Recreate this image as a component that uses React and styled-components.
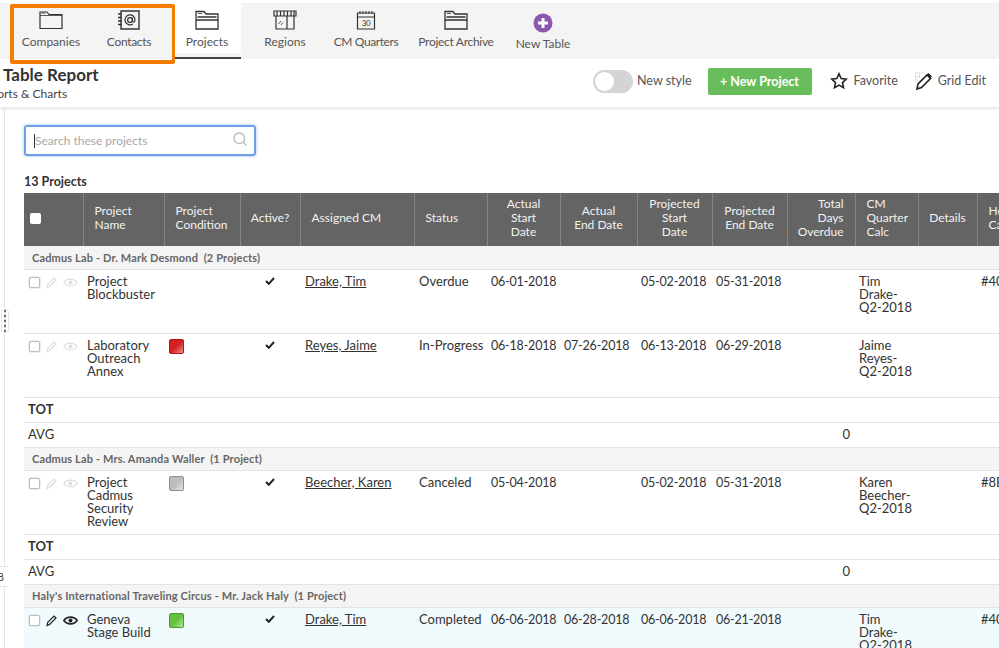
import React from 'react';
import styled, { createGlobalStyle } from 'styled-components';
import { FiSearch } from 'react-icons/fi';

const GlobalStyle = createGlobalStyle`
  html, body {
    margin: 0;
    padding: 0;
    background: #fff;
    font-family: Lato, "Open Sans", sans-serif;
    color: #333;
  }
`

const Page = styled.div`
  position: relative;
  width: 999px;
  height: 648px;
  overflow: hidden;
  background: #fff;
`

const TopNav = styled.nav`
  display: flex;
  align-items: stretch;
  height: 56px;
  margin-top: 3px;
  padding-left: 12px;
  background: #f4f4f4;
`

const Tab = styled.div`
  display: flex;
  flex-direction: column;
  align-items: center;
  box-sizing: border-box;
  width: ${p => p.$width}px;
  margin-left: ${p => p.$gap || 0}px;
  padding-top: ${p => p.$top || 7}px;
  font-size: 12px;
  letter-spacing: ${p => p.$track || 0}px;
  color: #555;
  background: ${p => (p.$active ? 'linear-gradient(#fff 0 50px, #f4f4f4 50px)' : 'transparent')};
  border-bottom: 2px solid ${p => (p.$active ? '#444' : 'transparent')};
  border-radius: 3px 3px 0 0;

  & svg {
    display: block;
    margin-bottom: ${p => p.$iconGap || 4}px;
  }
`

const Highlight = styled.div`
  position: absolute;
  left: 10px;
  top: 4px;
  width: 165px;
  height: 60px;
  box-sizing: border-box;
  border: 4px solid #f57c00;
  border-right-width: 3px;
  border-radius: 2px;
`

const HeaderBar = styled.header`
  display: flex;
  align-items: center;
  justify-content: space-between;
  height: 48px;
  box-shadow: 0 2px 3px rgba(0, 0, 0, 0.1);
`

const TitleBlock = styled.div`
  margin-left: 3px;
  margin-top: 2px;
`

const Title = styled.h1`
  margin: 0;
  font-size: 17px;
  line-height: 20px;
  font-weight: 700;
  color: #333;
`

const Subtitle = styled.div`
  margin-left: -26px;
  font-size: 12px;
  line-height: 18px;
  color: #444;
`

const Actions = styled.div`
  display: flex;
  align-items: center;
  margin-top: -4px;
  padding-right: 13px;
`

const Toggle = styled.span`
  display: flex;
  align-items: center;
  box-sizing: border-box;
  width: 40px;
  height: 23px;
  padding: 2px;
  border-radius: 12px;
  background: #d4d4d6;

  &::before {
    content: '';
    width: 19px;
    height: 19px;
    border-radius: 50%;
    background: #fff;
  }
`

const ActionLabel = styled.span`
  margin-left: ${p => p.$gap || 0}px;
  margin-top: -2px;
  font-size: 12.5px;
  color: #555;
`

const NewButton = styled.span`
  display: flex;
  align-items: center;
  justify-content: center;
  width: 104px;
  height: 27px;
  margin-left: 16px;
  border-radius: 2px;
  background: #68bd5b;
  color: #fff;
  font-size: 12.5px;
  font-weight: 700;
`

const ActionIcon = styled.svg`
  display: block;
  margin-left: ${p => p.$gap}px;
`

const Main = styled.main`
  position: relative;
  height: 541px;
  padding: 18px 0 0 24px;
  box-sizing: border-box;

  &::before {
    content: '';
    position: absolute;
    left: 4px;
    top: 0;
    bottom: 0;
    width: 1px;
    background: #e4e4e4;
  }
`

const DragHandle = styled.div`
  position: absolute;
  left: 1px;
  top: 202px;
  width: 6px;
  height: 22px;
  border: 1px solid #e6e6e6;
  border-radius: 3px;
  background:
    radial-gradient(circle, #333 0 1px, transparent 1.2px) center / 6px 5px repeat-y content-box,
    #fff;
`

const SideTab = styled.div`
  position: absolute;
  left: 0;
  top: 459px;
  box-sizing: border-box;
  width: 8px;
  height: 21px;
  padding-right: 4px;
  overflow: hidden;
  border-top: 1px solid #e4e4e4;
  border-bottom: 1px solid #e4e4e4;
  background: #fff;
  font-size: 11px;
  line-height: 19px;
  direction: rtl;
  color: #444;
`

const SearchBox = styled.div`
  display: flex;
  align-items: center;
  justify-content: space-between;
  box-sizing: border-box;
  width: 232px;
  height: 31px;
  padding: 0 6px 0 8px;
  border: 2px solid #6e9fe8;
  border-radius: 3px;
  box-shadow: 0 0 3px rgba(80, 140, 230, 0.6);
  color: #a8a8a8;
  font-size: 12px;

  & span {
    border-left: 1px solid #333;
    line-height: 14px;
  }

  & svg {
    color: #bbb;
    margin-top: -3px;
  }
`

const Count = styled.div`
  margin-top: 13px;
  height: 24px;
  line-height: 26px;
  font-size: 12.5px;
  font-weight: 700;
  color: #333;
`

const Grid = styled.table`
  table-layout: fixed;
  border-collapse: collapse;
  width: 1016px;
  font-size: 13px;
  line-height: 13px;
  color: #333;
`

const Head = styled.th`
  height: 53px;
  box-sizing: border-box;
  padding: ${p => (p.$left ? `0 4px 3px ${p.$first ? 5 : 11}px` : p.$right ? '0 11px 3px 4px' : '0 4px 3px')};
  background: #646464;
  border-left: 1px solid #838383;
  color: #f2f2f2;
  font-size: 12px;
  line-height: 14px;
  font-weight: 400;
  text-align: ${p => (p.$right ? 'right' : p.$left ? 'left' : 'center')};

  &:first-child {
    border-left: 0;
  }
`

const HeadCheck = styled.span`
  display: block;
  width: 11px;
  height: 11px;
  margin-left: 1px;
  border-radius: 2px;
  background: #fff;
`

const GroupRow = styled.tr`
  height: 23px;
  background: #f4f4f4;
  border-bottom: 1px solid #e2e2e2;
`

const GroupCell = styled.td`
  padding: 0 0 0 8px;
  font-size: 11px;
  font-weight: 700;
  letter-spacing: 0.15px;
  color: #666;
  white-space: pre;
`

const Row = styled.tr`
  height: 64px;
  background: ${p => (p.$selected ? '#f1fafd' : '#fff')};
  border-bottom: 1px solid #e2e2e2;
`

const Cell = styled.td`
  box-sizing: border-box;
  padding: 5px 4px 0 ${p => p.$pad ?? 4}px;
  vertical-align: top;
`

const StatusCell = styled(Cell)`
  white-space: nowrap;
  overflow: visible;
`

const DateCell = styled(Cell)`
  white-space: nowrap;
  font-size: 12.5px;
  letter-spacing: -0.2px;
`

const RowTools = styled.div`
  display: flex;
  align-items: center;
  gap: 5px;
  margin-top: 1px;
  color: ${p => (p.$on ? '#222' : '#ddd')};
`

const RowCheck = styled.span`
  display: block;
  box-sizing: border-box;
  width: 11px;
  height: 11px;
  border: 1px solid #bdbdbd;
  border-radius: 2px;
  background: #fff;
  box-shadow: 0 0 0 0.5px #d8d8d8;
`

const Condition = styled.span`
  display: block;
  box-sizing: border-box;
  width: 15px;
  height: 15px;
  border-radius: 2px;
  border: 1px solid ${p => p.$edge};
  background: linear-gradient(135deg, ${p => p.$base} 50%, ${p => p.$light});
`

const Check = styled.svg`
  display: block;
  margin: 2px auto 0;
`

const PersonLink = styled.span`
  text-decoration: underline;
`

const SummaryRow = styled.tr`
  height: 25px;
  border-bottom: 1px solid #e2e2e2;
`

const SummaryCell = styled.td`
  padding: 0 ${p => (p.$end ? 5 : 0)}px 0 4px;
  font-weight: ${p => (p.$bold ? 700 : 400)};
  text-align: ${p => (p.$end ? 'right' : 'left')};
`

const columns = [59, 81, 76, 60, 114, 73, 73, 77, 75, 75, 68, 63, 59, 63]

const heads = [
  { label: <HeadCheck />, left: true, first: true },
  { label: <>Project<br />Name</>, left: true },
  { label: <>Project<br />Condition</>, left: true },
  { label: 'Active?' },
  { label: 'Assigned CM', left: true },
  { label: 'Status', left: true },
  { label: <>Actual<br />Start<br />Date</> },
  { label: <>Actual<br />End Date</> },
  { label: <>Projected<br />Start<br />Date</> },
  { label: <>Projected<br />End Date</> },
  { label: <>Total<br />Days<br />Overdue</>, right: true },
  { label: <>CM<br />Quarter<br />Calc</>, left: true },
  { label: 'Details' },
  { label: <>Hex<br />Calc</>, left: true },
]

const conditions = {
  red: { $edge: '#b01818', $light: '#f29090', $base: '#d42020' },
  grey: { $edge: '#8e8e8e', $light: '#e6e6e6', $base: '#bdbdbd' },
  green: { $edge: '#4f9a2e', $light: '#b4ec98', $base: '#62c13e' },
}

const FolderIcon = () => (
  <svg width="24" height="20" viewBox="0 0 24 20" fill="none" stroke="#333" strokeWidth="1.2">
    <path d="M1 18.500V2h7l2 2.500h13v14z" />
    <path d="M1 5.500h22M2.500 3h4" strokeWidth="0.8" />
  </svg>
)

const ContactIcon = () => (
  <svg width="24" height="20" viewBox="0 0 24 20" fill="none" stroke="#333" strokeWidth="1.2">
    <path d="M4 1h18v18H4z" strokeWidth="1.4" />
    <path d="M1 4h4M1 7.500h4M1 11h4M1 14.500h4" strokeWidth="1.3" />
    <circle cx="13" cy="10" r="2.400" />
    <path d="M15.400 7.600v3.400c0 1.600 2.600 1.600 2.600-1A5 5 0 1 0 15.800 14" />
  </svg>
)

const OpenFolderIcon = () => (
  <svg width="24" height="20" viewBox="0 0 24 20" fill="none" stroke="#333" strokeWidth="1.3">
    <path d="M1 19V1.500h8l2 2.500h12v15z" />
    <path d="M1 10h22M2.500 7h19" />
    <path d="M3 3.500h4" strokeWidth="0.8" />
  </svg>
)

const StoreIcon = () => (
  <svg width="24" height="20" viewBox="0 0 24 20" fill="none" stroke="#333" strokeWidth="1.2">
    <path d="M1 1h22v5H1z" />
    <path d="M4 1v5M7.500 1v5M11 1v5M14.500 1v5M18 1v5M21 1v5" />
    <path d="M3 6v13h18V6M14 6v13" />
    <path d="M5.500 14l2.500-3M8 15l2-2.500" strokeWidth="0.8" />
  </svg>
)

const CalendarIcon = () => (
  <svg width="20" height="20" viewBox="0 0 20 20" fill="none" stroke="#333" strokeWidth="1.2">
    <path d="M1.500 3h17v16h-17zM1.500 7h17" />
    <path d="M4 1v3M7 1v3M10 1v3M13 1v3M16 1v3" strokeWidth="1" />
    <text x="10" y="16" fontSize="8" fontFamily="Lato, sans-serif" textAnchor="middle" fill="#333" stroke="none">30</text>
  </svg>
)

const PlusIcon = () => (
  <svg width="20" height="20" viewBox="0 0 20 20">
    <circle cx="10" cy="10" r="9.500" fill="#8a58ad" />
    <path d="M10 5v10M5 10h10" stroke="#fff" strokeWidth="3" />
  </svg>
)

const PencilIcon = () => (
  <svg width="13" height="13" viewBox="0 0 13 13" fill="none" stroke="currentColor" strokeWidth="1.2">
    <path d="M2 11.500l.6-3L9 2l2 2-6.400 6.400z" />
  </svg>
)

const EyeIcon = ({ on }) => (
  <svg width="15" height="11" viewBox="0 0 15 11" fill="none" stroke="currentColor" strokeWidth={on ? 1.6 : 1.2}>
    <path d="M.8 5.500C4 1 11 1 14.200 5.500 11 10 4 10 .8 5.500z" />
    <circle cx="7.500" cy="5.500" r="2" fill="currentColor" stroke="none" />
  </svg>
)

const Tools = ({ on }) => (
  <RowTools $on={on}>
    <RowCheck />
    <PencilIcon />
    <EyeIcon on={on} />
  </RowTools>
)

const ProjectRow = ({ name, condition, cm, status, dates, quarter, hex, selected }) => (
  <Row $selected={selected}>
    <Cell $pad={5}><Tools on={selected} /></Cell>
    <Cell>{name}</Cell>
    <Cell $pad={5}>{condition && <Condition {...conditions[condition]} />}</Cell>
    <Cell>
      <Check width="10" height="8" viewBox="0 0 10 8" fill="none" stroke="#222" strokeWidth="2">
        <path d="M1 4l2.800 2.800L9 1" />
      </Check>
    </Cell>
    <Cell $pad={5}><PersonLink>{cm}</PersonLink></Cell>
    <StatusCell $pad={5}>{status}</StatusCell>
    {dates.map((d, i) => <DateCell key={i}>{d}</DateCell>)}
    <Cell />
    <Cell>{quarter}</Cell>
    <Cell />
    <Cell>{hex}</Cell>
  </Row>
)

const Summary = () => (
  <>
    <SummaryRow>
      <SummaryCell $bold colSpan={14}>TOT</SummaryCell>
    </SummaryRow>
    <SummaryRow>
      <SummaryCell colSpan={10}>AVG</SummaryCell>
      <SummaryCell $end>0</SummaryCell>
      <SummaryCell colSpan={3} />
    </SummaryRow>
  </>
)

const Group = ({ children }) => (
  <GroupRow>
    <GroupCell colSpan={14}>{children}</GroupCell>
  </GroupRow>
)

function App() {
  return (
    <Page>
      <GlobalStyle />
      <TopNav>
        <Tab $width={78}><FolderIcon />Companies</Tab>
        <Tab $width={78} $track={-0.3}><ContactIcon />Contacts</Tab>
        <Tab $width={68} $gap={5} $active><OpenFolderIcon />Projects</Tab>
        <Tab $width={68} $gap={10}><StoreIcon />Regions</Tab>
        <Tab $width={80} $gap={7} $track={-0.4}><CalendarIcon />CM Quarters</Tab>
        <Tab $width={88} $gap={6} $track={-0.3}><OpenFolderIcon />Project Archive</Tab>
        <Tab $width={66} $gap={10} $top={10} $iconGap={3}><PlusIcon />New Table</Tab>
      </TopNav>
      <Highlight />
      <HeaderBar>
        <TitleBlock>
          <Title>Table Report</Title>
          <Subtitle>Reports &amp; Charts</Subtitle>
        </TitleBlock>
        <Actions>
          <Toggle />
          <ActionLabel $gap={4}>New style</ActionLabel>
          <NewButton>+ New Project</NewButton>
          <ActionIcon $gap={18} width="18" height="18" viewBox="0 0 18 18" fill="none" stroke="#222" strokeWidth="1.6">
            <path d="M9 1.800l2.200 4.700 5 .6-3.700 3.500 1 5L9 13.100 4.500 15.600l1-5L1.800 7.100l5-.6z" />
          </ActionIcon>
          <ActionLabel $gap={6}>Favorite</ActionLabel>
          <ActionIcon $gap={16} width="20" height="20" viewBox="0 0 20 20" fill="none">
            <path d="M1 2h10M1 5.500h6M1 9h4M2 2v9M5.500 2v5" stroke="#ccc" strokeDasharray="1 1" />
            <path d="M3 18l1-5L13 4l3.500 3.500-9 9z" stroke="#222" strokeWidth="1.6" />
            <path d="M13 4l1.500-1.500 3 3L16 7z" fill="#222" stroke="#222" />
          </ActionIcon>
          <ActionLabel $gap={4}>Grid Edit</ActionLabel>
        </Actions>
      </HeaderBar>
      <Main>
        <DragHandle />
        <SideTab>8</SideTab>
        <SearchBox>
          <span>Search these projects</span>
          <FiSearch size={16} />
        </SearchBox>
        <Count>13 Projects</Count>
        <Grid>
          <colgroup>
            {columns.map((w, i) => <col key={i} style={{ width: w }} />)}
          </colgroup>
          <thead>
            <tr>
              {heads.map((h, i) => (
                <Head key={i} $left={h.left} $right={h.right} $first={h.first}>{h.label}</Head>
              ))}
            </tr>
          </thead>
          <tbody>
            <Group>{'Cadmus Lab - Dr. Mark Desmond  (2 Projects)'}</Group>
            <ProjectRow
              name="Project Blockbuster"
              cm="Drake, Tim"
              status="Overdue"
              dates={['06-01-2018', '', '05-02-2018', '05-31-2018']}
              quarter="Tim Drake-Q2-2018"
              hex="#40"
            />
            <ProjectRow
              name="Laboratory Outreach Annex"
              condition="red"
              cm="Reyes, Jaime"
              status="In-Progress"
              dates={['06-18-2018', '07-26-2018', '06-13-2018', '06-29-2018']}
              quarter="Jaime Reyes-Q2-2018"
            />
            <Summary />
            <Group>{'Cadmus Lab - Mrs. Amanda Waller  (1 Project)'}</Group>
            <ProjectRow
              name="Project Cadmus Security Review"
              condition="grey"
              cm="Beecher, Karen"
              status="Canceled"
              dates={['05-04-2018', '', '05-02-2018', '05-31-2018']}
              quarter="Karen Beecher-Q2-2018"
              hex="#8B"
            />
            <Summary />
            <Group>{"Haly's International Traveling Circus - Mr. Jack Haly  (1 Project)"}</Group>
            <ProjectRow
              selected
              name="Geneva Stage Build"
              condition="green"
              cm="Drake, Tim"
              status="Completed"
              dates={['06-06-2018', '06-28-2018', '06-06-2018', '06-21-2018']}
              quarter="Tim Drake-Q2-2018"
              hex="#40"
            />
          </tbody>
        </Grid>
      </Main>
    </Page>
  );
}

export default App
